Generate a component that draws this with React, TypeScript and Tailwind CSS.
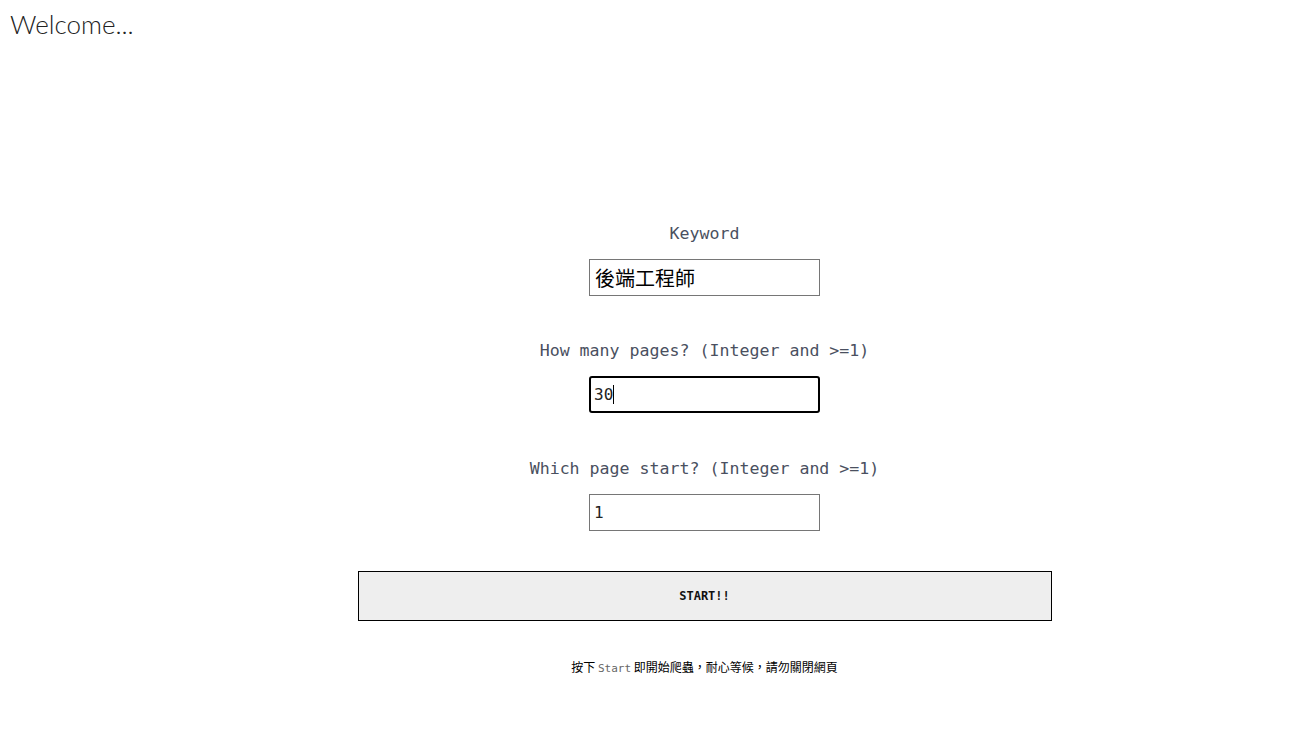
import React from "react";

const mono = { fontFamily: '"DejaVu Sans Mono", "Liberation Mono", monospace' };

type FieldProps = {
  label: string;
  value: string;
  cjk?: boolean;
  focused?: boolean;
};

const Field = ({ label, value, cjk = false, focused = false }: FieldProps) => (
  <div className="flex flex-col items-center">
    <label className="text-[16.6px] leading-6 text-[#4a5060] mb-[13px] font-['DejaVu_Sans_Mono','Liberation_Mono',monospace]">
      {label}
    </label>
    <div className="relative">
      <input
        readOnly
        value={value}
        className={
          focused
            ? "w-[231px] h-[37px] border-2 border-black rounded-[3px] px-[3px] outline-none text-[16px] text-[#222] font-['DejaVu_Sans_Mono','Liberation_Mono',monospace]"
            : cjk
            ? "w-[231px] h-[37px] border border-[#767676] px-[5px] outline-none text-[20px] text-black font-['Noto_Sans_CJK_TC',sans-serif]"
            : "w-[231px] h-[37px] border border-[#767676] px-[4px] outline-none text-[16px] text-[#222] font-['DejaVu_Sans_Mono','Liberation_Mono',monospace]"
        }
      />
      {focused && <span className="absolute left-[24px] top-[9px] w-px h-[19px] bg-black" />}
    </div>
  </div>
);

export default function App() {
  return (
    <div className="min-h-[735px] bg-white">
      {/* HEADER */}
      <h1 className="pl-[10px] pt-[8px] text-[26px] leading-8 font-light text-[#222] font-['Lato','Open_Sans',sans-serif]">
        Welcome...
      </h1>

      {/* FORM */}
      <main className="flex flex-col items-center pt-[182px] pl-[116px]">
        <Field label="Keyword" value="後端工程師" cjk />
        <div className="h-[43px]" />
        <Field label="How many pages? (Integer and >=1)" value="30" focused />
        <div className="h-[44px]" />
        <Field label="Which page start? (Integer and >=1)" value="1" />

        <button className="mt-[40px] w-[694px] h-[50px] bg-[#eeeeee] border border-black text-[12px] font-bold text-[#111] font-['DejaVu_Sans_Mono','Liberation_Mono',monospace]">
          START!!
        </button>

        <p className="mt-[37px] text-[12px] leading-[18px] text-black font-['Noto_Sans_CJK_TC',sans-serif]">
          按下 <span className="text-[11px] text-[#666]" style={mono}>Start</span> 即開始爬蟲，耐心等候，請勿關閉網頁
        </p>
      </main>
    </div>
  );
}
